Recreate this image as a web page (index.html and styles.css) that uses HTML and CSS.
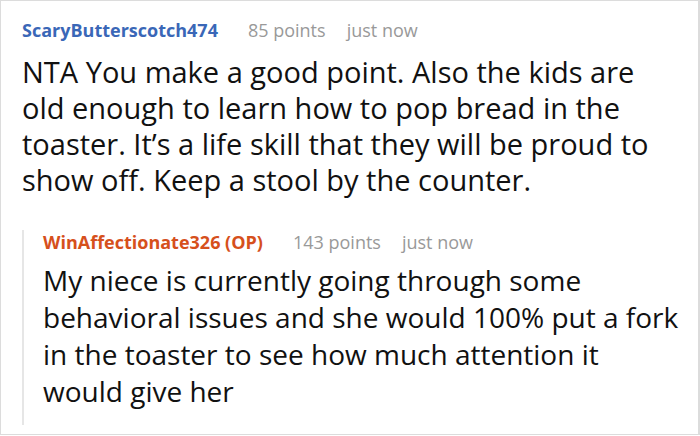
FILE: index.html
```html
<!DOCTYPE html>
<html>
<head>
<meta charset="utf-8">
<link rel="stylesheet" href="styles.css">
</head>
<body>
<div class="frame">
  <div class="comment">
    <div class="meta">
      <span class="user">ScaryButterscotch474</span>
      <span class="points">85 points</span>
      <span class="time">just now</span>
    </div>
    <p class="text main-text">NTA You make a good point. Also the kids are old enough to learn how to pop bread in the toaster. It’s a life skill that they will be proud to show off. Keep a stool by the counter.</p>
    <div class="reply">
      <div class="meta">
        <span class="user op">WinAffectionate326 (OP)</span>
        <span class="points">143 points</span>
        <span class="time">just now</span>
      </div>
      <p class="text">My niece is currently going through some behavioral issues and she would 100% put a fork in the toaster to see how much attention it would give her</p>
    </div>
  </div>
</div>
</body>
</html>
```

FILE: styles.css
```css
html, body {
  margin: 0;
  padding: 0;
  background: #ffffff;
}
.frame {
  width: 700px;
  height: 435px;
  box-sizing: border-box;
  border: 1px solid #dcdcdc;
  border-right-width: 2px;
  overflow: hidden;
  font-family: "Open Sans", "Noto Sans", sans-serif;
}
.comment {
  padding: 17px 16px 0 21px;
}
.meta {
  display: flex;
  align-items: baseline;
  font-size: 18px;
  line-height: 24px;
  color: #999999;
}
.user {
  font-weight: 700;
  color: #3a67b7;
}
.user.op {
  color: #d6501c;
}
.points {
  margin-left: 30px;
}
.time {
  margin-left: 21px;
}
.text {
  margin: 12px 0 0 0;
  font-size: 28px;
  line-height: 36px;
  color: #111111;
}
p.main-text {
  max-width: 640px;
  font-size: 29px;
}
.reply {
  margin-top: 42px;
  border-left: 2px solid #e6e6e6;
  padding-left: 19px;
  padding-bottom: 15px;
}
.reply .meta {
  margin-top: -10px;
}
.reply .text {
  margin-top: 8px;
  line-height: 37px;
}
```
